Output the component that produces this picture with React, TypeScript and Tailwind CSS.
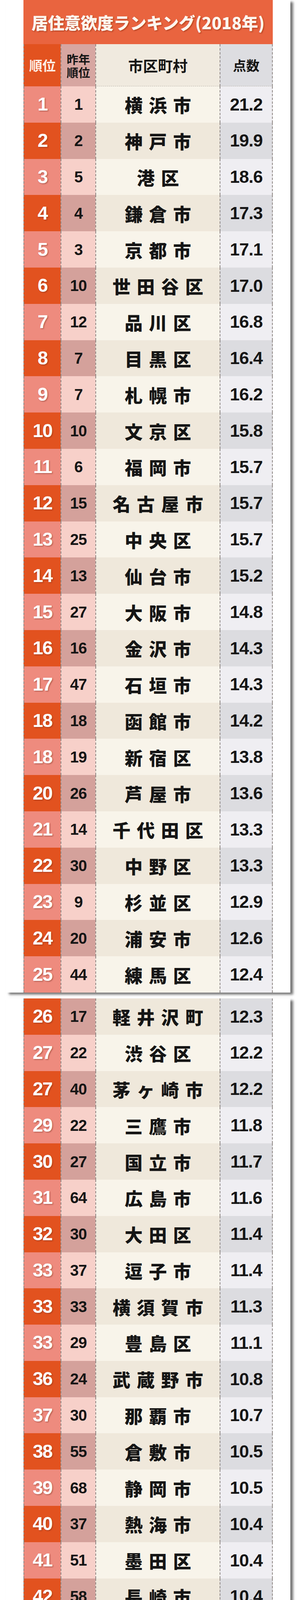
import React from "react";

type Row = [string, string, string, string];

const partOne: Row[] = [
  ["1", "1", "横浜市", "21.2"],
  ["2", "2", "神戸市", "19.9"],
  ["3", "5", "港区", "18.6"],
  ["4", "4", "鎌倉市", "17.3"],
  ["5", "3", "京都市", "17.1"],
  ["6", "10", "世田谷区", "17.0"],
  ["7", "12", "品川区", "16.8"],
  ["8", "7", "目黒区", "16.4"],
  ["9", "7", "札幌市", "16.2"],
  ["10", "10", "文京区", "15.8"],
  ["11", "6", "福岡市", "15.7"],
  ["12", "15", "名古屋市", "15.7"],
  ["13", "25", "中央区", "15.7"],
  ["14", "13", "仙台市", "15.2"],
  ["15", "27", "大阪市", "14.8"],
  ["16", "16", "金沢市", "14.3"],
  ["17", "47", "石垣市", "14.3"],
  ["18", "18", "函館市", "14.2"],
  ["18", "19", "新宿区", "13.8"],
  ["20", "26", "芦屋市", "13.6"],
  ["21", "14", "千代田区", "13.3"],
  ["22", "30", "中野区", "13.3"],
  ["23", "9", "杉並区", "12.9"],
  ["24", "20", "浦安市", "12.6"],
  ["25", "44", "練馬区", "12.4"],
];

const partTwo: Row[] = [
  ["26", "17", "軽井沢町", "12.3"],
  ["27", "22", "渋谷区", "12.2"],
  ["27", "40", "茅ヶ崎市", "12.2"],
  ["29", "22", "三鷹市", "11.8"],
  ["30", "27", "国立市", "11.7"],
  ["31", "64", "広島市", "11.6"],
  ["32", "30", "大田区", "11.4"],
  ["33", "37", "逗子市", "11.4"],
  ["33", "33", "横須賀市", "11.3"],
  ["33", "29", "豊島区", "11.1"],
  ["36", "24", "武蔵野市", "10.8"],
  ["37", "30", "那覇市", "10.7"],
  ["38", "55", "倉敷市", "10.5"],
  ["39", "68", "静岡市", "10.5"],
  ["40", "37", "熱海市", "10.4"],
  ["41", "51", "墨田区", "10.4"],
  ["42", "58", "長崎市", "10.4"],
  ["43", "74", "宮古島市", "10.4"],
  ["44", "51", "宇治市", "10.3"],
  ["45", "54", "別府市", "10.3"],
  ["46", "30", "富良野市", "10.2"],
  ["47", "69", "浜松市", "10.2"],
  ["48", "44", "国分寺市", "10.1"],
  ["49", "61", "立川市", "10.1"],
  ["50", "47", "熊本市", "10.0"],
  ["50", "61", "宝塚市", "10.0"],
  ["50", "67", "長野市", "10.0"],
];

const jp = "font-['Noto_Sans_CJK_JP','Noto_Sans_CJK_SC',sans-serif]";
const num = "font-['Liberation_Sans','Noto_Sans_CJK_JP',sans-serif]";
const dash = "border-l-2 border-dashed border-[#8f8784]";
const dashR = "border-r-2 border-dashed border-[#8f8784]";

// light / dark stripes per column
const stripe = {
  rank: ["bg-[#ee8b7e]", "bg-[#e2521f]"],
  prev: ["bg-[#f7d0c9]", "bg-[#d4a19b]"],
  name: ["bg-[#f8f4ea]", "bg-[#efe8db]"],
  score: ["bg-[#efeef2]", "bg-[#dcdce0]"],
};

function RankRow({ row, dark }: { row: Row; dark: boolean }) {
  const [rank, prev, name, score] = row;
  const k = dark ? 1 : 0;
  return (
    <div className="flex h-[92.8px] w-[638px]">
      <div className={`flex w-[95px] items-center justify-center ${dash} ${stripe.rank[k]}`}>
        <span
          className={`${num} text-[48px] font-bold tracking-[-2px] text-white [text-shadow:2px_2px_3px_rgba(110,40,30,0.45)]`}
        >
          {rank}
        </span>
      </div>
      <div className={`flex w-[89px] items-center justify-center ${dash} ${stripe.prev[k]}`}>
        <span className={`${num} text-[40px] font-bold tracking-[-1px] text-[#151515]`}>{prev}</span>
      </div>
      <div className={`flex w-[318px] items-center justify-center ${dash} ${stripe.name[k]}`}>
        <span className={`${jp} pl-[16px] text-[46px] font-black leading-none tracking-[16px] text-[#151515]`}>
          {name}
        </span>
      </div>
      <div className={`flex w-[136px] items-center justify-center ${dash} ${dashR} ${stripe.score[k]}`}>
        <span className={`${num} text-[45px] font-bold tracking-[-1px] text-[#151515]`}>{score}</span>
      </div>
    </div>
  );
}

export default function App() {
  return (
    <div className="w-[760px] bg-white">
      <div className="ml-[16px] w-[727px] bg-white pl-[44px] pr-[45px] shadow-[7px_5px_6px_rgba(0,0,0,0.55)]">
        <div className="flex h-[113px] items-center justify-center bg-[#e9643f]">
          <h1
            className={`${jp} text-[42px] font-black leading-none text-[#fdf6ee] [text-shadow:2px_2px_3px_rgba(120,30,10,0.5)]`}
          >
            居住意欲度ランキング(2018年)
          </h1>
        </div>
        <div className="flex h-[108px] w-[638px]">
          <div className={`flex w-[95px] items-center justify-center ${dash} bg-[#e2521f]`}>
            <span className={`${jp} text-[34px] font-bold leading-none text-[#fdeee6]`}>順位</span>
          </div>
          <div className={`flex w-[89px] items-center justify-center ${dash} bg-[#d7a6a1]`}>
            <p className={`${jp} w-[62px] text-center text-[30px] font-bold leading-[34px] text-[#151515]`}>
              昨年順位
            </p>
          </div>
          <div
            className={`flex w-[318px] items-center justify-center ${dash} border-b border-b-[#b8b2a8] bg-[#f0eadf]`}
          >
            <span className={`${jp} text-[38px] font-bold leading-none text-[#151515]`}>市区町村</span>
          </div>
          <div
            className={`flex w-[136px] items-center justify-center ${dash} ${dashR} border-b border-b-[#b8b2a8] bg-[#dddde1]`}
          >
            <span className={`${jp} text-[34px] font-bold leading-none text-[#151515]`}>点数</span>
          </div>
        </div>
        {partOne.map((row, i) => (
          <RankRow key={i} row={row} dark={i % 2 === 1} />
        ))}
      </div>

      <div className="mt-[15px] ml-[16px] w-[727px] bg-white pl-[44px] pr-[45px] shadow-[7px_5px_6px_rgba(0,0,0,0.55)]">
        {partTwo.map((row, i) => (
          <RankRow key={i} row={row} dark={i % 2 === 0} />
        ))}
        <div className="flex h-[6.4px] w-[638px]">
          <div className={`w-[95px] ${dash} ${stripe.rank[0]}`} />
          <div className={`w-[89px] ${dash} ${stripe.prev[0]}`} />
          <div className={`w-[318px] ${dash} ${stripe.name[0]}`} />
          <div className={`w-[136px] ${dash} ${dashR} ${stripe.score[0]}`} />
        </div>
      </div>
    </div>
  );
}
